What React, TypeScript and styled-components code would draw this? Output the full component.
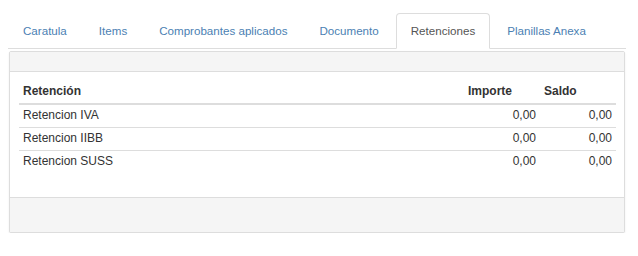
import styled, { createGlobalStyle } from "styled-components";

const GlobalStyle = createGlobalStyle`
  body {
    margin: 0;
    background: #fff;
    font-family: "Liberation Sans", Arial, sans-serif;
    font-size: 12px;
    color: #333;
  }
`;

type Retencion = {
  nombre: string;
  importe: string;
  saldo: string;
};

const tabs = [
  "Caratula",
  "Items",
  "Comprobantes aplicados",
  "Documento",
  "Retenciones",
  "Planillas Anexa",
];

const retenciones: Retencion[] = [
  { nombre: "Retencion IVA", importe: "0,00", saldo: "0,00" },
  { nombre: "Retencion IIBB", importe: "0,00", saldo: "0,00" },
  { nombre: "Retencion SUSS", importe: "0,00", saldo: "0,00" },
];

export default function App() {
  return (
    <>
      <GlobalStyle />
      <Page>
        <TabList>
          {tabs.map((t) => (
            <Tab key={t} $active={t === "Retenciones"}>
              {t}
            </Tab>
          ))}
        </TabList>
        <Panel>
          <PanelHeader />
          <PanelBody>
            <Table>
              <colgroup>
                <col />
                <col style={{ width: 76 }} />
                <col style={{ width: 76 }} />
              </colgroup>
              <thead>
                <tr>
                  <Th>Retención</Th>
                  <Th>Importe</Th>
                  <Th>Saldo</Th>
                </tr>
              </thead>
              <tbody>
                {retenciones.map((r) => (
                  <tr key={r.nombre}>
                    <Td>{r.nombre}</Td>
                    <Td $num>{r.importe}</Td>
                    <Td $num>{r.saldo}</Td>
                  </tr>
                ))}
              </tbody>
            </Table>
          </PanelBody>
          <PanelFooter />
        </Panel>
      </Page>
    </>
  );
}

const Page = styled.div`
  padding: 13px 12px 0 8px;
  width: 618px;
`;

const TabList = styled.ul`
  display: flex;
  margin: 0;
  padding: 0;
  list-style: none;
  border-bottom: 1px solid #ddd;
`;

const Tab = styled.li<{ $active?: boolean }>`
  flex-shrink: 0;
  white-space: nowrap;
  margin-right: 2px;
  margin-bottom: -1px;
  padding: 8px 14px 9px;
  line-height: 17px;
  font-size: 11.6px;
  border: 1px solid ${(p) => (p.$active ? "#ddd" : "transparent")};
  border-bottom-color: ${(p) => (p.$active ? "#fff" : "transparent")};
  border-radius: 4px 4px 0 0;
  background: ${(p) => (p.$active ? "#fff" : "transparent")};
  color: ${(p) => (p.$active ? "#555" : "#4b7fb3")};
`;

const Panel = styled.div`
  margin: 2px 1px 0 1px;
  border: 1px solid #ddd;
  border-radius: 2px;
  background: #fff;
  box-shadow: 0 1px 2px rgba(0, 0, 0, 0.08);
`;

const PanelHeader = styled.div`
  height: 19px;
  background: #f5f5f5;
  border-bottom: 1px solid #ddd;
`;

const PanelBody = styled.div`
  box-sizing: border-box;
  height: 125px;
  padding: 8px 8px 0 9px;
`;

const PanelFooter = styled.div`
  height: 34px;
  background: #f5f5f5;
  border-top: 1px solid #ddd;
`;

const Table = styled.table`
  width: 100%;
  border-collapse: collapse;
  table-layout: fixed;
`;

const Th = styled.th`
  text-align: left;
  font-weight: bold;
  color: #333;
  padding: 3px 4px;
  line-height: 17px;
  border-bottom: 2px solid #ddd;
`;

const Td = styled.td<{ $num?: boolean }>`
  text-align: ${(p) => (p.$num ? "right" : "left")};
  padding: 2px 4px 3px;
  line-height: 17px;
  color: #333;
  border-top: 1px solid #ddd;
  tbody tr:first-child & {
    border-top: none;
  }
`;
